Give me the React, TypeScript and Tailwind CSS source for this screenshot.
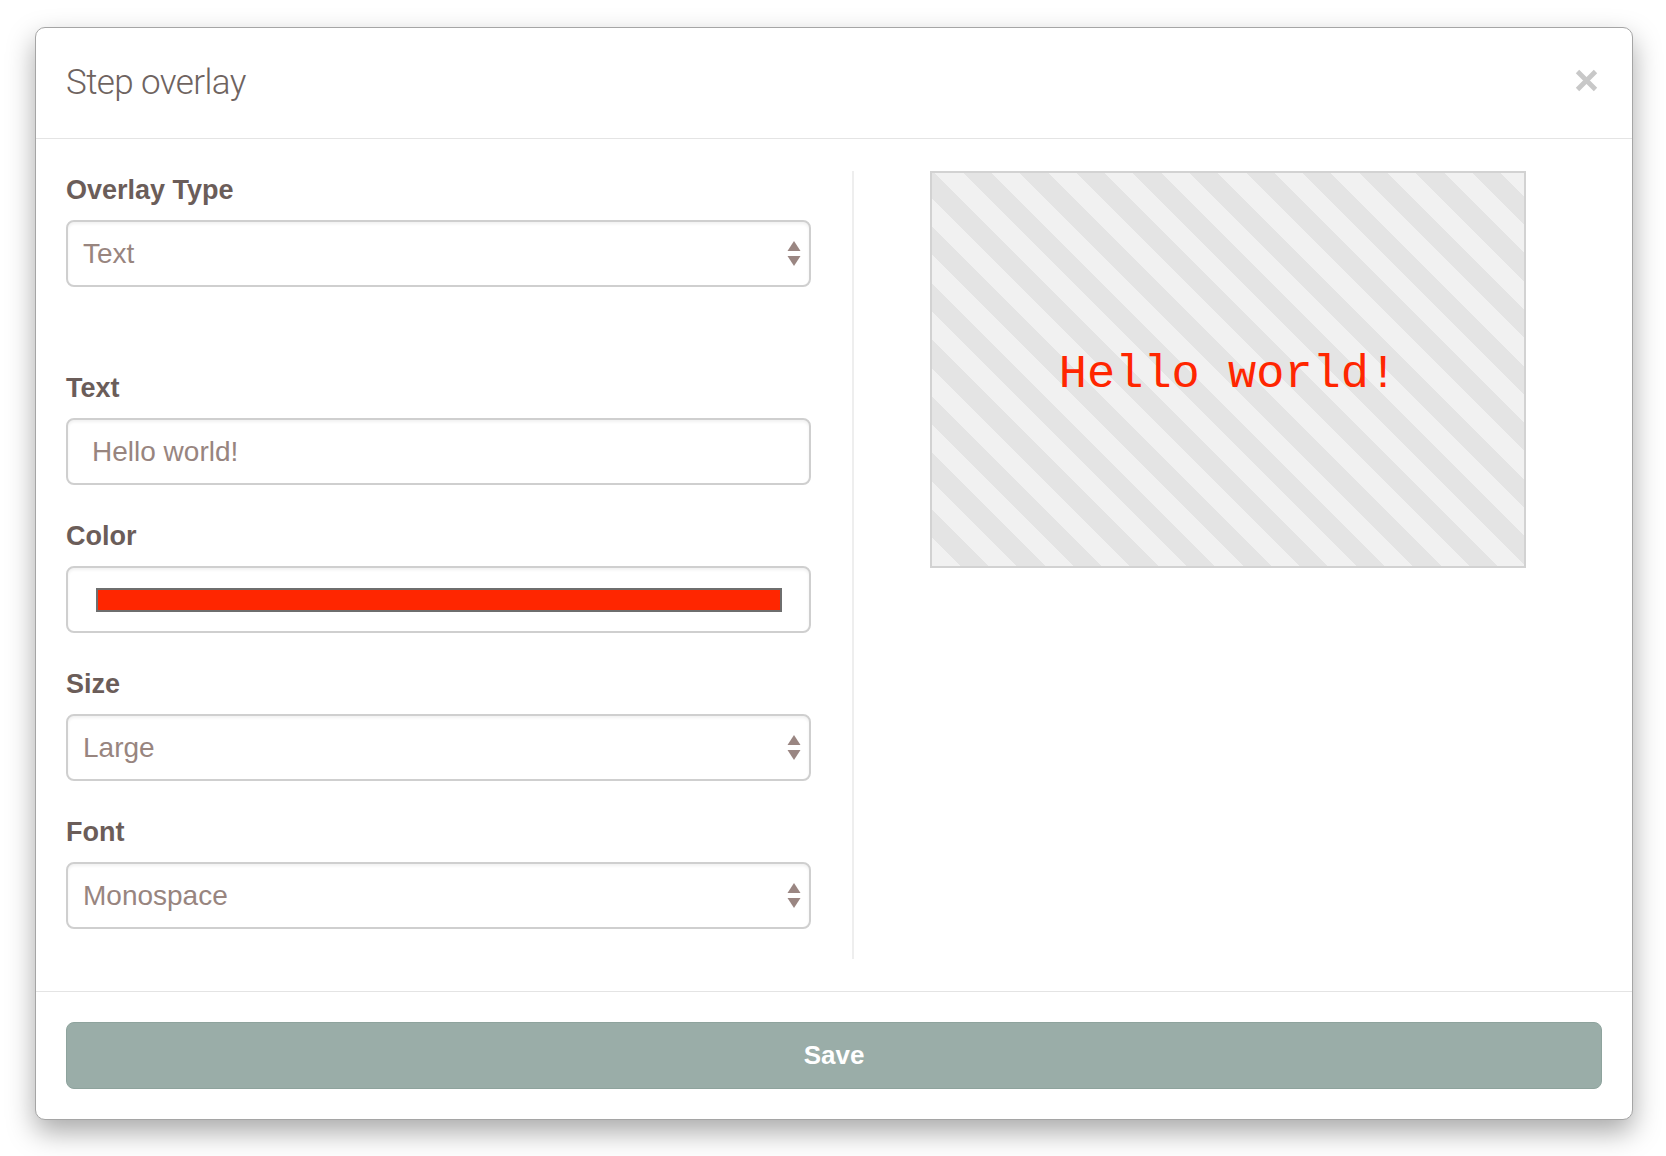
const fieldBox =
  "h-[67px] w-full rounded-[8px] border-2 border-[#cfcfcf] bg-white shadow-[inset_0_2px_3px_rgba(0,0,0,0.06)]";

const labelCls = "block text-[27px] font-bold leading-none text-[#6b5d59]";

export default function App() {
  return (
    <div className="min-h-screen bg-white pt-[27px] pl-[35px] font-['Liberation_Sans',Arial,sans-serif]">
      <div className="w-[1598px] overflow-hidden rounded-[10px] border border-[#a5a5a5] bg-white shadow-[0_12px_28px_rgba(0,0,0,0.34)]">
        {/* header */}
        <div className="flex h-[111px] items-center justify-between border-b border-[#e4e4e4] pl-[30px] pr-[34px]">
          <h1 className="font-['Roboto',sans-serif] text-[35px] font-light tracking-[-0.6px] text-[#6e6360]">
            Step overlay
          </h1>
          <div className="mb-[6px]">
            <CloseIcon />
          </div>
        </div>

        {/* body */}
        <div className="flex px-[30px] pt-[32px] pb-[32px]">
          <div className="w-[788px] border-r-2 border-[#eeeeee] pr-[41px] pt-[6px] pb-[30px]">
            <Field label="Overlay Type">
              <SelectBox value="Text" />
            </Field>

            <div className="mt-[88px]">
              <Field label="Text">
                <div className={`${fieldBox} flex items-center pl-[24px] text-[28px] text-[#98857f]`}>
                  Hello world!
                </div>
              </Field>
            </div>

            <div className="mt-[38px]">
              <Field label="Color">
                <div className={`${fieldBox} flex items-center pl-[28px] pr-[27px]`}>
                  <div className="h-[24px] w-full border-2 border-[#6e6e6e] bg-[#ff2600]" />
                </div>
              </Field>
            </div>

            <div className="mt-[38px]">
              <Field label="Size">
                <SelectBox value="Large" />
              </Field>
            </div>

            <div className="mt-[38px]">
              <Field label="Font">
                <SelectBox value="Monospace" />
              </Field>
            </div>
          </div>

          <div className="flex flex-1 justify-center">
            <div className="flex h-[397px] w-[596px] items-center justify-center border-2 border-[#d2d2d2] bg-[repeating-linear-gradient(45deg,#f1f1f1_0px,#f1f1f1_20px,#e4e4e4_20px,#e4e4e4_40px)] pt-[10px]">
              <span className="font-['Courier_New','Liberation_Mono',monospace] text-[47px] leading-none text-[#ff2600]">
                Hello world!
              </span>
            </div>
          </div>
        </div>

        {/* footer */}
        <div className="border-t border-[#e4e4e4] px-[30px] py-[30px]">
          <button className="flex h-[67px] w-full items-center justify-center rounded-[8px] border border-[#8ea39d] bg-[#9aada8] text-[26px] font-bold text-white">
            Save
          </button>
        </div>
      </div>
    </div>
  );
}

function Field({ label, children }: { label: string; children: React.ReactNode }) {
  return (
    <div>
      <label className={labelCls}>{label}</label>
      <div className="mt-[16px]">{children}</div>
    </div>
  );
}

function SelectBox({ value }: { value: string }) {
  return (
    <div className={`${fieldBox} flex items-center justify-between pl-[15px] pr-[8px] text-[28px] text-[#98857f]`}>
      <span>{value}</span>
      <UpDown />
    </div>
  );
}

function UpDown() {
  return (
    <svg width="14" height="26" viewBox="0 0 14 26" fill="#9a8682" aria-hidden="true">
      <path d="M7 0L13.5 10H0.5Z" />
      <path d="M0.5 15H13.5L7 25Z" />
    </svg>
  );
}

function CloseIcon() {
  return (
    <svg width="23" height="23" viewBox="0 0 23 23" aria-hidden="true">
      <path
        d="M2.5 2.5L20.5 20.5M20.5 2.5L2.5 20.5"
        stroke="#c8c8c8"
        strokeWidth="4.8"
      />
    </svg>
  );
}
